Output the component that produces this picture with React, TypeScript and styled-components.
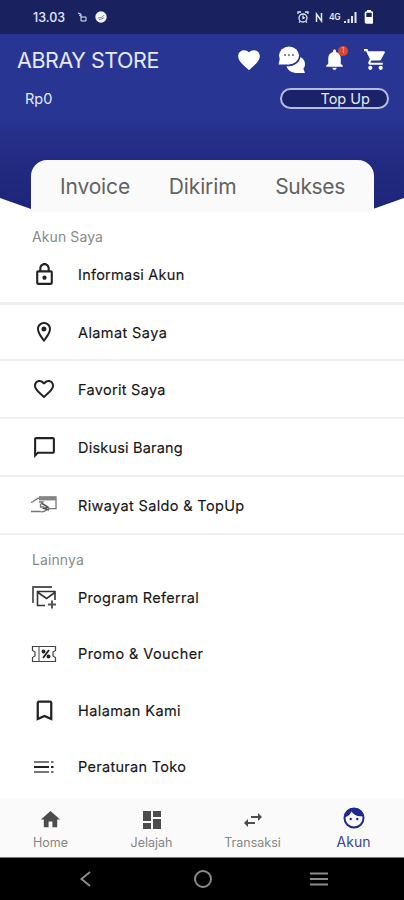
import React from 'react';
import styled, { createGlobalStyle } from 'styled-components';

const Global = createGlobalStyle`
  * { box-sizing: border-box; }
  body { margin: 0; background: #fff; font-family: Inter, Roboto, sans-serif; }
  svg { display: block; flex: none; }
`;

const Screen = styled.div`
  width: 404px;
  height: 900px;
  display: flex;
  flex-direction: column;
  overflow: hidden;
  background: #fff;
`;

const StatusBar = styled.div`
  height: 34px;
  flex: none;
  display: flex;
  align-items: center;
  padding: 0 31px 0 33px;
  background: #19225f;
  color: #e4e7f7;
`;

const Clock = styled.span`
  width: 37px;
  font-size: 12.5px;
  font-weight: 500;
`;

const StatusLeft = styled.div`
  display: flex;
  align-items: center;
  gap: 7px;
`;

const StatusRight = styled.div`
  display: flex;
  align-items: center;
  margin-left: auto;
`;

const Network = styled.span`
  margin: 0 4px 0 6px;
  font-size: 8.5px;
  font-weight: 600;
  letter-spacing: -0.5px;
`;

const NfcMark = styled.svg`
  margin-left: 6px;
`;

const BatteryMark = styled.svg`
  margin-left: 1px;
`;

const Header = styled.header`
  height: 175px;
  flex: none;
  display: flex;
  flex-direction: column;
  background: linear-gradient(#283593 0, #283593 84px, #26308a 100px, #222b80 128px, #1c2579 175px);
  clip-path: polygon(0 0, 100% 0, 100% 164px, 373px 100%, 31px 100%, 0 164px);
`;

const TitleRow = styled.div`
  height: 52px;
  display: flex;
  align-items: center;
  justify-content: space-between;
  padding: 0 16px 0 17px;
  color: #e6eafb;
`;

const StoreName = styled.h1`
  margin: 0;
  font-size: 21.5px;
  font-weight: 400;
  letter-spacing: -0.45px;
  white-space: nowrap;
`;

const HeaderIcons = styled.div`
  display: flex;
  align-items: center;
  gap: 16px;
  margin-top: -1px;
  color: #fff;
`;

const BellWrap = styled.div`
  position: relative;
`;

const Badge = styled.span`
  position: absolute;
  top: -1px;
  right: -1px;
  width: 10px;
  height: 10px;
  border-radius: 50%;
  background: #d9482c;
  color: #f4b5a2;
  font-size: 7px;
  line-height: 10px;
  text-align: center;
`;

const BalanceRow = styled.div`
  height: 24px;
  display: flex;
  align-items: center;
  justify-content: space-between;
  padding: 0 15px 0 25px;
  color: #e6eafb;
`;

const Balance = styled.span`
  font-size: 14.5px;
`;

const TopUpButton = styled.button`
  width: 109px;
  height: 21px;
  padding: 0 17px 0 0;
  border: 2px solid #b4bbdf;
  border-radius: 11px;
  background: #1a2369;
  color: #e6eafb;
  font: 400 14.500px/18px Inter, sans-serif;
  text-align: right;
`;

const OrderTabs = styled.nav`
  position: relative;
  height: 52px;
  flex: none;
  display: flex;
  align-items: center;
  margin: -49px 30px 0 31px;
  padding: 0 29px;
  justify-content: space-between;
  border-radius: 16px 16px 0 0;
  background: #fafafa;
`;

const OrderTab = styled.span<{ $tracking: number }>`
  font-size: 21px;
  letter-spacing: ${(p) => p.$tracking}px;
  color: #626262;
`;

const SectionTitle = styled.h2`
  margin: 0;
  height: 34px;
  flex: none;
  padding: 16px 0 0 32px;
  color: #8a8a8a;
  font-size: 14px;
  font-weight: 400;
  line-height: 17px;
  letter-spacing: 0.1px;
`;

const Row = styled.div<{ $height: number; $line?: number }>`
  height: ${(p) => p.$height}px;
  flex: none;
  display: flex;
  align-items: center;
  border-bottom: ${(p) => p.$line ?? 0}px solid #f0f0f0;
`;

const RowIcon = styled.span`
  width: 78px;
  display: flex;
  justify-content: center;
  padding-left: 10px;
  color: #222;
`;

const RowLabel = styled.span<{ $tracking: number }>`
  font-size: 14.5px;
  letter-spacing: ${(p) => p.$tracking}px;
  color: #161616;
  -webkit-text-stroke: 0.15px #161616;
`;

const BottomNav = styled.nav`
  height: 59px;
  flex: none;
  display: grid;
  grid-template-columns: repeat(4, 1fr);
  margin-top: auto;
  background: #fafafa;
`;

const NavItem = styled.div<{ $active?: boolean }>`
  height: 54px;
  display: flex;
  flex-direction: column;
  align-items: center;
  justify-content: space-between;
  padding-top: ${(p) => (p.$active ? 9 : 10)}px;
  color: ${(p) => (p.$active ? '#1f2a8c' : '#4c4c4c')};
`;

const NavLabel = styled.span<{ $active?: boolean }>`
  font-size: ${(p) => (p.$active ? 14 : 12.5)}px;
  line-height: ${(p) => (p.$active ? 20 : 18)}px;
  color: ${(p) => (p.$active ? '#3a449b' : '#858585')};
`;

const SystemBar = styled.div`
  height: 43px;
  flex: none;
  display: flex;
  align-items: center;
  justify-content: space-between;
  padding: 0 75px 0 76px;
  border-top: 1px solid #777;
  background: #000;
  color: #8b8b8b;
`;

const Glyph = ({ d, size = 24 }: { d: string; size?: number }) => (
  <svg width={size} height={size} viewBox="0 0 24 24" fill="currentColor">
    <path d={d} />
  </svg>
);

const paths = {
  heart: 'M12 21.35l-1.45-1.32C5.4 15.36 2 12.28 2 8.5 2 5.42 4.42 3 7.5 3c1.74 0 3.41.81 4.5 2.09C13.09 3.81 14.76 3 16.5 3 19.58 3 22 5.42 22 8.5c0 3.78-3.4 6.86-8.55 11.54L12 21.35z',
  bell: 'M12 22c1.1 0 2-.9 2-2h-4c0 1.1.89 2 2 2zm6-6v-5c0-3.07-1.64-5.64-4.5-6.32V4c0-.83-.67-1.5-1.5-1.5s-1.5.67-1.5 1.5v.68C7.63 5.36 6 7.92 6 11v5l-2 2v1h16v-1l-2-2z',
  cart: 'M7 18c-1.1 0-1.99.9-1.99 2S5.9 22 7 22s2-.9 2-2-.9-2-2-2zM1 2v2h2l3.6 7.59-1.35 2.45c-.16.28-.25.61-.25.96 0 1.1.9 2 2 2h12v-2H7.42c-.14 0-.25-.11-.25-.25l.03-.12.9-1.63h7.45c.75 0 1.41-.41 1.75-1.03l3.58-6.49A1 1 0 0 0 20 4H5.21l-.94-2H1zm16 16c-1.1 0-1.99.9-1.99 2s.89 2 1.99 2 2-.9 2-2-.9-2-2-2z',
  lock: 'M18 8h-1V6c0-2.76-2.24-5-5-5S7 3.24 7 6v2H6c-1.1 0-2 .9-2 2v10c0 1.1.9 2 2 2h12c1.1 0 2-.9 2-2V10c0-1.1-.9-2-2-2zM9 6c0-1.66 1.34-3 3-3s3 1.34 3 3v2H9V6zm9 14H6V10h12v10zm-6-3c1.100 0 2-.9 2-2s-.9-2-2-2-2 .9-2 2 .9 2 2 2z',
  pin: 'M12 2C8.13 2 5 5.13 5 9c0 5.25 7 13 7 13s7-7.75 7-13c0-3.87-3.13-7-7-7zM7 9c0-2.76 2.24-5 5-5s5 2.24 5 5c0 2.88-2.88 7.19-5 9.88C9.92 16.21 7 11.85 7 9zM12 6.5a2.5 2.5 0 1 0 0 5 2.5 2.5 0 0 0 0-5z',
  heartLine: 'M16.5 3c-1.74 0-3.41.81-4.5 2.09C10.91 3.81 9.24 3 7.5 3 4.42 3 2 5.42 2 8.5c0 3.78 3.4 6.86 8.55 11.54L12 21.35l1.45-1.32C18.6 15.36 22 12.28 22 8.5 22 5.42 19.58 3 16.5 3zm-4.4 15.55l-.1.1-.1-.1C7.14 14.24 4 11.39 4 8.5 4 6.5 5.5 5 7.5 5c1.54 0 3.04.99 3.57 2.36h1.87C13.46 5.99 14.96 5 16.5 5c2 0 3.5 1.5 3.5 3.5 0 2.89-3.14 5.74-7.9 10.05z',
  chat: 'M20 2H4c-1.1 0-2 .9-2 2v18l4-4h14c1.1 0 2-.9 2-2V4c0-1.1-.9-2-2-2zm0 14H5.2L4 17.2V4h16v12z',
  bookmark: 'M17 3H7c-1.1 0-2 .9-2 2v16l7-3 7 3V5c0-1.1-.9-2-2-2zm0 15l-5-2.18L7 18V5h10v13z',
  home: 'M10 20v-6h4v6h5v-8h3L12 3 2 12h3v8z',
  dashboard: 'M3 13h8V3H3v10zm0 8h8v-6H3v6zm10 0h8V11h-8v10zm0-18v6h8V3h-8z',
  swap: 'M6.99 11L3 15l3.99 4v-3H14v-2H6.99v-3zM21 9l-3.99-4v3H10v2h7.01v3L21 9z',
};

const ChatsIcon = () => (
  <svg width="28" height="28" viewBox="0 0 28 28">
    <path d="M22 11c3 1 5 4 5 7 0 2-.7 3.500-1.600 5l1.600 4h-7.500C14 27 9.500 24.500 8.500 20 15 21 21 17 22 11z" fill="#fff" />
    <ellipse cx="11" cy="9.500" rx="10" ry="9" fill="#fff" />
    <path d="M2 12L.5 18.500H11L7 14z" fill="#fff" />
    <path d="M8 19.300c7 1.300 13.500-2.800 14-9.300" stroke="#283593" strokeWidth="1.200" fill="none" />
    <path d="M6 9h2M10 9h2M14 9h2" stroke="#59639f" strokeWidth="1.500" />
  </svg>
);

const HandCardIcon = () => (
  <svg width="28" height="20" viewBox="0 0 28 20" fill="none" stroke="#777" strokeWidth="1.300">
    <path d="M1 7.500C5 6 6 3 10 3M1 16.500h9c3 1 5 0 8-2.500M9 7h4l-2.500 2.500V12h4" />
    <path d="M9 2h17v11.700h-8" />
    <path d="M9 3.700h17" stroke="#858585" strokeWidth="3.400" />
    <path d="M12 8.500l6 3.500-4 1.500 5 1.500" stroke="#555" strokeWidth="1.500" />
  </svg>
);

const ReferralIcon = () => (
  <svg width="26" height="24" viewBox="0 0 26 24" fill="none" stroke="#333" strokeWidth="1.600">
    <path d="M2 18V2h19" stroke="#555" strokeWidth="1.800" />
    <path d="M14 20.500H6.500V6.500H24V15M7 7.500l8.500 6L24 7.500" />
    <path d="M21 15.500v8M17 19.500h8" stroke="#555" strokeWidth="2" />
  </svg>
);

const VoucherIcon = () => (
  <svg width="26" height="18" viewBox="0 0 26 18" fill="none" stroke="#444" strokeWidth="1.200">
    <path d="M1.500 1.500h23v4l-2.500 1.500v4l2.500 1.500v4h-23v-4L4 11V7L1.500 5.500z" />
    <path d="M8 2v14" strokeWidth="1" />
    <path d="M18 5l-6 8" stroke="#222" strokeWidth="1.800" />
    <circle cx="12.500" cy="6.500" r="1.400" fill="#222" stroke="#222" />
    <circle cx="17.500" cy="11.500" r="1.400" fill="#222" stroke="#222" />
  </svg>
);

const RulesIcon = () => (
  <svg width="20" height="14" viewBox="0 0 20 14" fill="none" strokeWidth="2">
    <path d="M0 2h15M17 2h2.500M0 12h15M17 12h2.500" stroke="#777" />
    <path d="M0 7h15M17 7h2.500" stroke="#222" />
  </svg>
);

const FaceIcon = () => (
  <svg width="22" height="22" viewBox="0 0 22 22">
    <circle cx="11" cy="11" r="9.500" fill="none" stroke="currentColor" strokeWidth="2" />
    <path d="M1.500 10.500C5 9.500 7.500 7.500 8.500 4.500c2.500 4 6.500 5.500 12 4.500C19 3.500 15.500 1 11 1S2 4 1.500 10.500z" fill="currentColor" />
    <circle cx="7.700" cy="12" r="1.200" fill="currentColor" />
    <circle cx="14.300" cy="12" r="1.200" fill="currentColor" />
  </svg>
);

const accountRows = [
  { label: 'Informasi Akun', tracking: 0.25, height: 59, line: 3, icon: <Glyph d={paths.lock} size={25} /> },
  { label: 'Alamat Saya', tracking: 0.4, height: 56, line: 2, icon: <Glyph d={paths.pin} size={24} /> },
  { label: 'Favorit Saya', tracking: 0.3, height: 58, line: 2, icon: <Glyph d={paths.heartLine} /> },
  { label: 'Diskusi Barang', tracking: 0.2, height: 58, line: 2, icon: <Glyph d={paths.chat} size={25} /> },
  { label: 'Riwayat Saldo & TopUp', tracking: 0.35, height: 58, line: 2, icon: <HandCardIcon /> },
];

const otherRows = [
  { label: 'Program Referral', tracking: 0.3, icon: <ReferralIcon /> },
  { label: 'Promo & Voucher', tracking: 0.4, icon: <VoucherIcon /> },
  { label: 'Halaman Kami', tracking: 0.4, icon: <Glyph d={paths.bookmark} size={27} /> },
  { label: 'Peraturan Toko', tracking: 0.3, icon: <RulesIcon /> },
];

export default function App() {
  return (
    <Screen>
      <Global />
      <StatusBar>
        <StatusLeft>
          <Clock>13.03</Clock>
          <svg width="11" height="11" viewBox="0 0 11 11" fill="none" stroke="currentColor">
            <path d="M1 1l3 1v7M4 5h5v4H4M2 3l2 1" />
          </svg>
          <svg width="12" height="12" viewBox="0 0 12 12">
            <circle cx="6" cy="6" r="5.700" fill="#f4f5fc" />
            <path d="M3 7c3 0 5-1 6-3M4 8.500c2 0 4-1 5-2" stroke="#7e86ae" fill="none" />
          </svg>
        </StatusLeft>
        <StatusRight>
          <svg width="12" height="13" viewBox="0 0 12 13" fill="none" stroke="currentColor" strokeWidth="1.300">
            <circle cx="6" cy="7" r="4" />
            <path d="M1 3V1h3M11 3V1H8M6 4.500v3l2-1M3 10.500l-1 1M9 10.500l1 1" />
          </svg>
          <NfcMark width="8" height="11" viewBox="0 0 8 11" fill="none" stroke="currentColor" strokeWidth="1.500">
            <path d="M1.500 10V2l5 7V1" />
          </NfcMark>
          <Network>4G</Network>
          <svg width="13" height="11" viewBox="0 0 13 11" fill="currentColor">
            <path d="M0 9h2v2H0zM3.500 7h2v4h-2zM7 4h2v7H7zM10.500 0h2v11h-2z" />
          </svg>
          <BatteryMark width="15" height="14" viewBox="0 0 15 14">
            <path d="M9 0h4v2H9z" fill="#fff" />
            <rect x="7.500" y="2" width="7" height="11" rx="1" fill="none" stroke="#fff" strokeWidth="1.600" />
            <path d="M8 7h6v6H8z" fill="#fff" />
          </BatteryMark>
        </StatusRight>
      </StatusBar>
      <Header>
        <TitleRow>
          <StoreName>ABRAY STORE</StoreName>
          <HeaderIcons>
            <Glyph d={paths.heart} size={26} />
            <ChatsIcon />
            <BellWrap>
              <Glyph d={paths.bell} size={25} />
              <Badge>1</Badge>
            </BellWrap>
            <Glyph d={paths.cart} size={25} />
          </HeaderIcons>
        </TitleRow>
        <BalanceRow>
          <Balance>Rp0</Balance>
          <TopUpButton>Top Up</TopUpButton>
        </BalanceRow>
      </Header>
      <OrderTabs>
        <OrderTab $tracking={-0.15}>Invoice</OrderTab>
        <OrderTab $tracking={-0.15}>Dikirim</OrderTab>
        <OrderTab $tracking={-0.35}>Sukses</OrderTab>
      </OrderTabs>
      <SectionTitle>Akun Saya</SectionTitle>
      {accountRows.map((r) => (
        <Row key={r.label} $height={r.height} $line={r.line}>
          <RowIcon>{r.icon}</RowIcon>
          <RowLabel $tracking={r.tracking}>{r.label}</RowLabel>
        </Row>
      ))}
      <SectionTitle>Lainnya</SectionTitle>
      {otherRows.map((r) => (
        <Row key={r.label} $height={56.5}>
          <RowIcon>{r.icon}</RowIcon>
          <RowLabel $tracking={r.tracking}>{r.label}</RowLabel>
        </Row>
      ))}
      <BottomNav>
        <NavItem>
          <Glyph d={paths.home} size={23} />
          <NavLabel>Home</NavLabel>
        </NavItem>
        <NavItem>
          <Glyph d={paths.dashboard} size={24} />
          <NavLabel>Jelajah</NavLabel>
        </NavItem>
        <NavItem>
          <Glyph d={paths.swap} size={24} />
          <NavLabel>Transaksi</NavLabel>
        </NavItem>
        <NavItem $active>
          <FaceIcon />
          <NavLabel $active>Akun</NavLabel>
        </NavItem>
      </BottomNav>
      <SystemBar>
        <svg width="20" height="20" viewBox="0 0 20 20" fill="none" stroke="currentColor" strokeWidth="2">
          <path d="M14 3L5.500 10l8.500 7" />
        </svg>
        <svg width="20" height="20" viewBox="0 0 20 20" fill="none" stroke="currentColor" strokeWidth="2">
          <circle cx="10" cy="10" r="8" />
        </svg>
        <svg width="20" height="20" viewBox="0 0 20 20" fill="none" stroke="currentColor" strokeWidth="2.200">
          <path d="M1 4.500h18M1 10h18M1 15.500h18" />
        </svg>
      </SystemBar>
    </Screen>
  );
}
